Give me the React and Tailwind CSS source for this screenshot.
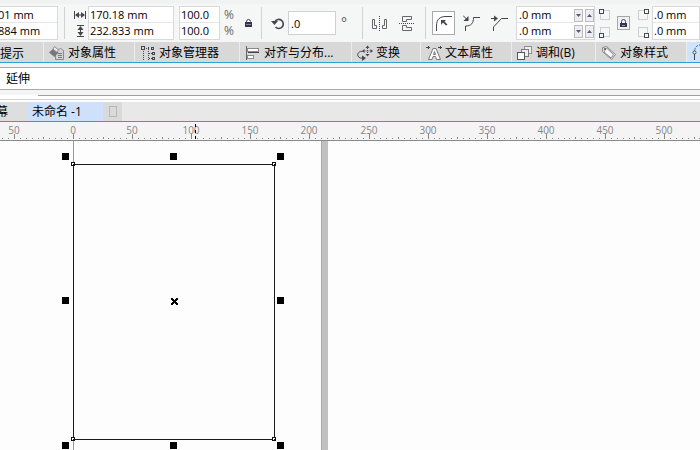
import React from 'react';

const Svg = ({ w = 16, h = 16, children }) => (
  <svg width={w} height={h} viewBox={`0 0 ${w} ${h}`} fill="none" stroke="#45454d" className="block shrink-0" aria-hidden="true">
    {children}
  </svg>
);

const Separator = ({ className }) => <div className={`h-8 w-px shrink-0 bg-[#d2d2d4] ${className}`} />;

const Field = ({ label, value, className = '' }) => (
  <input
    aria-label={label}
    defaultValue={value}
    className={`block h-4 min-w-0 bg-white text-black outline-none ${className}`}
  />
);

const Stack = ({ fields, width, pad = 'pl-px' }) => (
  <div className={`shrink-0 divide-y divide-[#e6e6e8] border border-[#d9d9dc] ${width}`}>
    {fields.map(([label, value]) => (
      <Field key={label} label={label} value={value} className={`w-full ${pad}`} />
    ))}
  </div>
);

const Spinner = ({ label }) => (
  <div className="flex h-4 items-center gap-[2px]">
    <button aria-label={`${label} down`} className="flex h-[13px] w-[9px] items-center justify-center border border-[#bcbcc0] bg-[#eeeef1]">
      <Svg w={5} h={3}><path d="M0 0h5L2.5 3z" fill="#55557d" stroke="none" /></Svg>
    </button>
    <button aria-label={`${label} up`} className="flex h-[13px] w-[9px] items-center justify-center border border-[#bcbcc0] bg-[#eeeef1]">
      <Svg w={5} h={3}><path d="M0 3h5L2.5 0z" fill="#55557d" stroke="none" /></Svg>
    </button>
  </div>
);

const Corner = ({ x, y }) => (
  <Svg w={12} h={12}>
    <rect x="1.5" y="1.5" width="9" height="9" stroke="#cfcfd2" />
    <rect x={x + 0.5} y={y + 0.5} width="4" height="4" fill="#f6f6f7" stroke="#4a4a4e" />
  </Svg>
);

const icons = {
  properties: (
    <Svg>
      <path d="M6.500 5.500l5-2 3 2v9h-8z" fill="#d4d4d7" stroke="#8a8a90" />
      <path d="M0 7.500L5 3l4.500 4.500L5.500 12z" fill="#77777d" stroke="none" />
      <path d="M5.500 1.500l4 3.500-2 2-3.500-3z" fill="#ededee" stroke="#909096" />
      <path d="M9 8.500h4M9 10.500h4M9 12.500h4" stroke="#77777d" />
    </Svg>
  ),
  manager: (
    <Svg>
      <rect x="1.5" y="1.5" width="3" height="3" />
      <path d="M3.5 6v9M8.5 2v13" strokeDasharray="1 1" />
      <path d="M6 3.5h3M9 8.5h3M9 13.5h3" strokeDasharray="1 1" />
      <rect x="11.5" y="2.5" width="2" height="2" />
      <rect x="12.5" y="7.5" width="2" height="2" />
      <rect x="12.5" y="12.5" width="2" height="2" />
    </Svg>
  ),
  align: (
    <Svg>
      <path d="M1.5 1v14" stroke="#66666a" />
      <rect x="2.5" y="3.5" width="11" height="3" fill="#fff" stroke="#8a8a8e" />
      <path d="M3 7.5h11" stroke="#44444a" />
      <rect x="2.5" y="10.5" width="6" height="3" fill="#fff" stroke="#8a8a8e" />
    </Svg>
  ),
  transform: (
    <Svg>
      <path d="M5.500 6.500C2 6 0 8.500 1 11c1 2 3 2.500 5 2" />
      <path d="M5 10.500l4 2.500-4 3z" fill="#45454d" stroke="none" />
      <path d="M10.500 1v10M5.500 6h10" strokeDasharray="1 1" />
      <path d="M10.500 0.500L8.500 3h4zM10.500 11.500L8.500 9h4zM5 6l2.500-2v4zM16 6l-2.500-2v4z" fill="#45454d" stroke="none" />
    </Svg>
  ),
  text: (
    <Svg>
      <path d="M2.500 14.500L7 3.500h3l4.500 11h-4l-1-3H7l-1 3zM8.500 6.500l-1 3h2z" fill="#fff" stroke="#77777c" />
      <path d="M0 2.500h4M2.500 1v3M12 2.500h4M14.500 1v3" />
    </Svg>
  ),
  blend: (
    <Svg>
      <rect x="7.500" y="1.500" width="7" height="7" fill="#eee" stroke="#909094" />
      <rect x="4.500" y="4.500" width="7" height="7" fill="#eee" stroke="#77777c" />
      <rect x="0.500" y="7.500" width="7" height="7" fill="#fafafa" stroke="#55555b" />
    </Svg>
  ),
  styles: (
    <Svg>
      <path d="M1.500 2.500l4-1 9 8-4 5-9-8z" fill="#e4e4e6" stroke="#88888c" />
      <path d="M5.500 3l7 6.500-2.500 3.500-7-6z" fill="#f8f8f8" stroke="#8c8c90" />
      <circle cx="4" cy="4" r="1" fill="#555" stroke="none" />
    </Svg>
  ),
};

const dockers = [
  ['对象属性', 'properties', 'w-[91px]'],
  ['对象管理器', 'manager', 'w-[105px]'],
  ['对齐与分布...', 'align', 'w-[112px]'],
  ['变换', 'transform', 'w-[69px]'],
  ['文本属性', 'text', 'w-[91px]'],
  ['调和(B)', 'blend', 'w-[84px]'],
  ['对象样式', 'styles', 'w-[91px]'],
];

function PropertyBar() {
  return (
    <div className="flex h-[42px] items-center overflow-hidden border-t-4 border-[#f1f2f2] bg-[#f5f6f6] text-[11px] leading-4">
      <div className="w-[58px] shrink-0 overflow-hidden">
        <Stack fields={[['X position', '01 mm'], ['Y position', '884 mm']]} width="-ml-1 w-[62px]" />
      </div>
      <Separator className="ml-[6px]" />
      <div className="ml-2 flex shrink-0 flex-col gap-[2px]">
        <Svg w={14} h={14}>
          <path d="M1.500 3v8M12.500 3v8M3 7h8" />
          <path d="M2 7l4-3v6zM12 7L8 4v6z" fill="#45454d" stroke="none" />
        </Svg>
        <Svg w={14} h={14}>
          <path d="M4 1.500h7M4 12.500h7M7.500 3v8" />
          <path d="M7.500 2l-3 4h6zM7.500 12l-3-4h6z" fill="#45454d" stroke="none" />
        </Svg>
      </div>
      <div className="ml-px shrink-0">
        <Stack fields={[['Width', '170.18 mm'], ['Height', '232.833 mm']]} width="w-[86px]" />
      </div>
      <div className="ml-[5px] shrink-0">
        <Stack fields={[['Scale X', '100.0'], ['Scale Y', '100.0']]} width="w-[41px]" />
      </div>
      <div className="ml-1 w-3 shrink-0 text-[12px] text-[#66666a]">
        <div>%</div>
        <div>%</div>
      </div>
      <button aria-label="Lock ratio" className="ml-2">
        <Svg w={10} h={10}>
          <path d="M2.500 5V3.500a2 2 0 014 0" />
          <rect x="1" y="4" width="7" height="5" fill="#34344c" stroke="none" />
          <path d="M2 6.500h5" stroke="#85859a" />
        </Svg>
      </button>
      <Separator className="ml-[7px]" />
      <div className="ml-2">
        <Svg w={16} h={16}>
          <path d="M5 6.500a4.500 4.500 0 11.500 5.500" strokeWidth="1.600" />
          <path d="M1 6h7L4.500 10z" fill="#45454d" stroke="none" />
        </Svg>
      </div>
      <Field label="Rotation" value=".0" className="ml-[2px] h-6 w-12 shrink-0 border border-[#d0d0d3] pl-[2px]" />
      <span className="ml-[5px] w-2 shrink-0 text-[14px] text-[#55555a]">°</span>
      <Separator className="ml-[13px]" />
      <button aria-label="Mirror horizontally" className="ml-2">
        <Svg>
          <path d="M1.500 4.500h2v6h2v3h-4zM15.500 4.500h-2v6h-2v3h4z" stroke="#66666b" />
          <path d="M8.500 1v15" strokeDasharray="1 1" />
        </Svg>
      </button>
      <button aria-label="Mirror vertically" className="ml-3">
        <Svg>
          <path d="M3.500 1.500h9v3h-5v2h-4zM3.500 15.500h9v-3h-5v-2h-4z" stroke="#66666b" />
          <path d="M0 8.500h16" strokeDasharray="1 1" />
        </Svg>
      </button>
      <Separator className="ml-[10px]" />
      <button aria-label="Round corner" className="ml-[6px] flex h-6 w-[23px] shrink-0 items-center justify-center border border-[#aaaaae] bg-white">
        <Svg w={18} h={18}>
          <path d="M1.500 17v-5C1.500 5 5 2.500 11 2.500h6" />
          <path d="M6 6h5L9.500 7.500l3 3-1.500 1-3-3L6 11z" fill="#45454d" stroke="none" />
        </Svg>
      </button>
      <button aria-label="Scalloped corner" className="ml-2">
        <Svg w={18} h={18}>
          <path d="M2.500 17v-5c6 0 8-3 8-8.500H17M0 1.500l4 4" />
          <path d="M5.500 2v5H.5z" fill="#45454d" stroke="none" />
        </Svg>
      </button>
      <button aria-label="Chamfered corner" className="ml-[10px]">
        <Svg w={18} h={18}>
          <path d="M2.500 17v-4l8-8.500H17M0 4.500h5" />
          <path d="M3 1.500l4 3-4 3z" fill="#45454d" stroke="none" />
        </Svg>
      </button>
      <div className="ml-[7px] flex shrink-0 border border-[#d9d9dc] bg-white">
        <div className="divide-y divide-[#e6e6e8]">
          <Field label="Corner radius 1" value=".0 mm" className="w-[57px] pl-[2px]" />
          <Field label="Corner radius 2" value=".0 mm" className="w-[57px] pl-[2px]" />
        </div>
        <div>
          <Spinner label="Corner radius 1" />
          <Spinner label="Corner radius 2" />
        </div>
      </div>
      <div className="ml-1 flex shrink-0 flex-col gap-[5px]">
        <Corner x={0} y={0} />
        <Corner x={0} y={7} />
      </div>
      <button aria-label="Edit corners together" className="ml-[6px] flex h-[14px] w-[13px] shrink-0 items-center justify-center border border-[#a5a5aa] bg-[#f0f0f3]">
        <Svg w={9} h={9}>
          <path d="M2.500 4V2.500a2 2 0 014 0V4" />
          <rect x="1" y="4" width="7" height="4" fill="#34344c" stroke="none" />
          <path d="M3 6.500h3" stroke="#9999aa" />
        </Svg>
      </button>
      <div className="ml-[7px] flex shrink-0 flex-col gap-[5px]">
        <Corner x={7} y={0} />
        <Corner x={7} y={7} />
      </div>
      <div className="ml-[3px] flex-1">
        <Stack fields={[['Corner radius 3', '.0 mm'], ['Corner radius 4', '.0 mm']]} width="w-full" />
      </div>
    </div>
  );
}

function Dockers() {
  return (
    <div className="flex h-[21px] overflow-hidden border-b border-[#2f9fd6] bg-[#d8d8d9] text-[12px] leading-5">
      <button className="w-11 shrink-0 border-r border-[#ececec] pt-[2px] text-left">提示</button>
      {dockers.map(([name, icon, width]) => (
        <button key={name} className={`flex shrink-0 items-center gap-[3px] whitespace-nowrap border-r border-[#ececec] pl-[5px] pt-[2px] ${width}`}>
          {icons[icon]}
          {name}
        </button>
      ))}
      <button aria-label="Curve" className="flex flex-1 items-center bg-[#cfe3fb] pl-1">
        <Svg>
          <path d="M3.500 7C4 3 6 1 10 1" stroke="#2d7dbd" strokeDasharray="3 1" />
          <path d="M3.500 10v6" />
          <circle cx="3.500" cy="8.500" r="1.500" fill="#fff" />
        </Svg>
      </button>
    </div>
  );
}

const UNIT = 1.182;
const ORIGIN = 73;

function Ruler() {
  const count = Math.floor((window.innerWidth + 10) / (5 * UNIT));
  const ticks = Array.from({ length: count }, (_, i) => (i - 12) * 5);
  const labels = ticks.filter((t) => t % 50 === 0 && ORIGIN + t * UNIT < window.innerWidth - 12);
  return (
    <div className="h-[19px] overflow-hidden border-b border-[#8a8a8a] bg-[#f4f4f4]">
      <svg width="100%" height="18" className="block" shapeRendering="crispEdges">
        {ticks.map((t) => {
          const x = Math.round(ORIGIN + t * UNIT);
          const h = t % 50 === 0 ? 5 : t % 25 === 0 ? 2 : 1;
          return <rect key={t} x={x} y={17 - h} width="1" height={h} fill="#858585" />;
        })}
        {labels.map((t) => (
          <text key={t} x={Math.round(ORIGIN + t * UNIT)} y="12" textAnchor="middle" fontSize="10" fill="#858585">
            {Math.abs(t)}
          </text>
        ))}
        <path d="M195.500 2v15" stroke="#000" strokeDasharray="3 3" />
      </svg>
    </div>
  );
}

const handles = [[62, 12], [170, 12], [277, 12], [62, 156], [277, 156], [62, 301], [170, 301], [277, 301]];
const nodes = [[71, 21], [272, 21], [71, 296], [272, 296]];

function Canvas() {
  return (
    <main className="min-h-0 flex-1 overflow-hidden bg-[#fdfdfd]">
      <svg width="100%" height="100%" className="block" shapeRendering="crispEdges" role="img" aria-label="Selected rectangle">
        <rect x="321" y="0" width="7" height="100%" fill="#c1c1c1" />
        <rect x="321" y="0" width="1" height="100%" fill="#aaa" />
        <rect x="73" y="0" width="1" height="100%" fill="#999" />
        <rect x="73.500" y="23.500" width="201" height="275" fill="none" stroke="#1a1a1a" />
        {handles.map(([x, y]) => <rect key={`${x}-${y}`} x={x} y={y} width="7" height="7" fill="#000" />)}
        {nodes.map(([x, y]) => (
          <g key={`${x}-${y}`}>
            <rect x={x + 0.5} y={y + 0.5} width="3" height="3" fill="#fff" stroke="#111" />
            <rect x={x + 2} y={y + 2} width="1" height="1" fill="#111" />
          </g>
        ))}
        <path d="M171 157h2v1h1v1h1v-1h1v-1h2v2h-1v1h-1v1h1v1h1v2h-2v-1h-1v-1h-1v1h-1v1h-2v-2h1v-1h1v-1h-1v-1h-1z" fill="#000" />
      </svg>
    </main>
  );
}

export default function App() {
  return (
    <div className="flex h-screen flex-col overflow-hidden bg-[#f4f4f4] font-['Open_Sans','Noto_Sans_CJK_SC',sans-serif] text-black">
      <PropertyBar />
      <Dockers />
      <div className="mt-1 h-[23px] border-y border-[#a9a9a9] bg-white pl-[6px] text-[12px] leading-[21px]">延伸</div>
      <div className="flex h-[12px] flex-col bg-white">
        <div className="h-[5px] bg-[#f4f4f4]" />
        <div className="ml-[38px] h-px bg-[#a0a0a0]" />
        <div className="mt-[3px] h-px bg-[#d4d4d4]" />
      </div>
      <div className="flex h-5 overflow-hidden border-b border-[#2f9fd6] bg-[#e8e8e9] text-[12px] leading-[19px]">
        <div className="w-7 shrink-0 overflow-hidden bg-[#dedede]">
          <button className="-ml-1">幕</button>
        </div>
        <button className="w-[75px] shrink-0 bg-[#cfe0fc] pl-1 text-left">未命名 -1</button>
        <button aria-label="New document" className="flex w-[19px] shrink-0 items-center justify-center bg-[#dadada]">
          <span className="h-[11px] w-2 border border-[#b9b9b9]" />
        </button>
      </div>
      <Ruler />
      <Canvas />
    </div>
  );
}
